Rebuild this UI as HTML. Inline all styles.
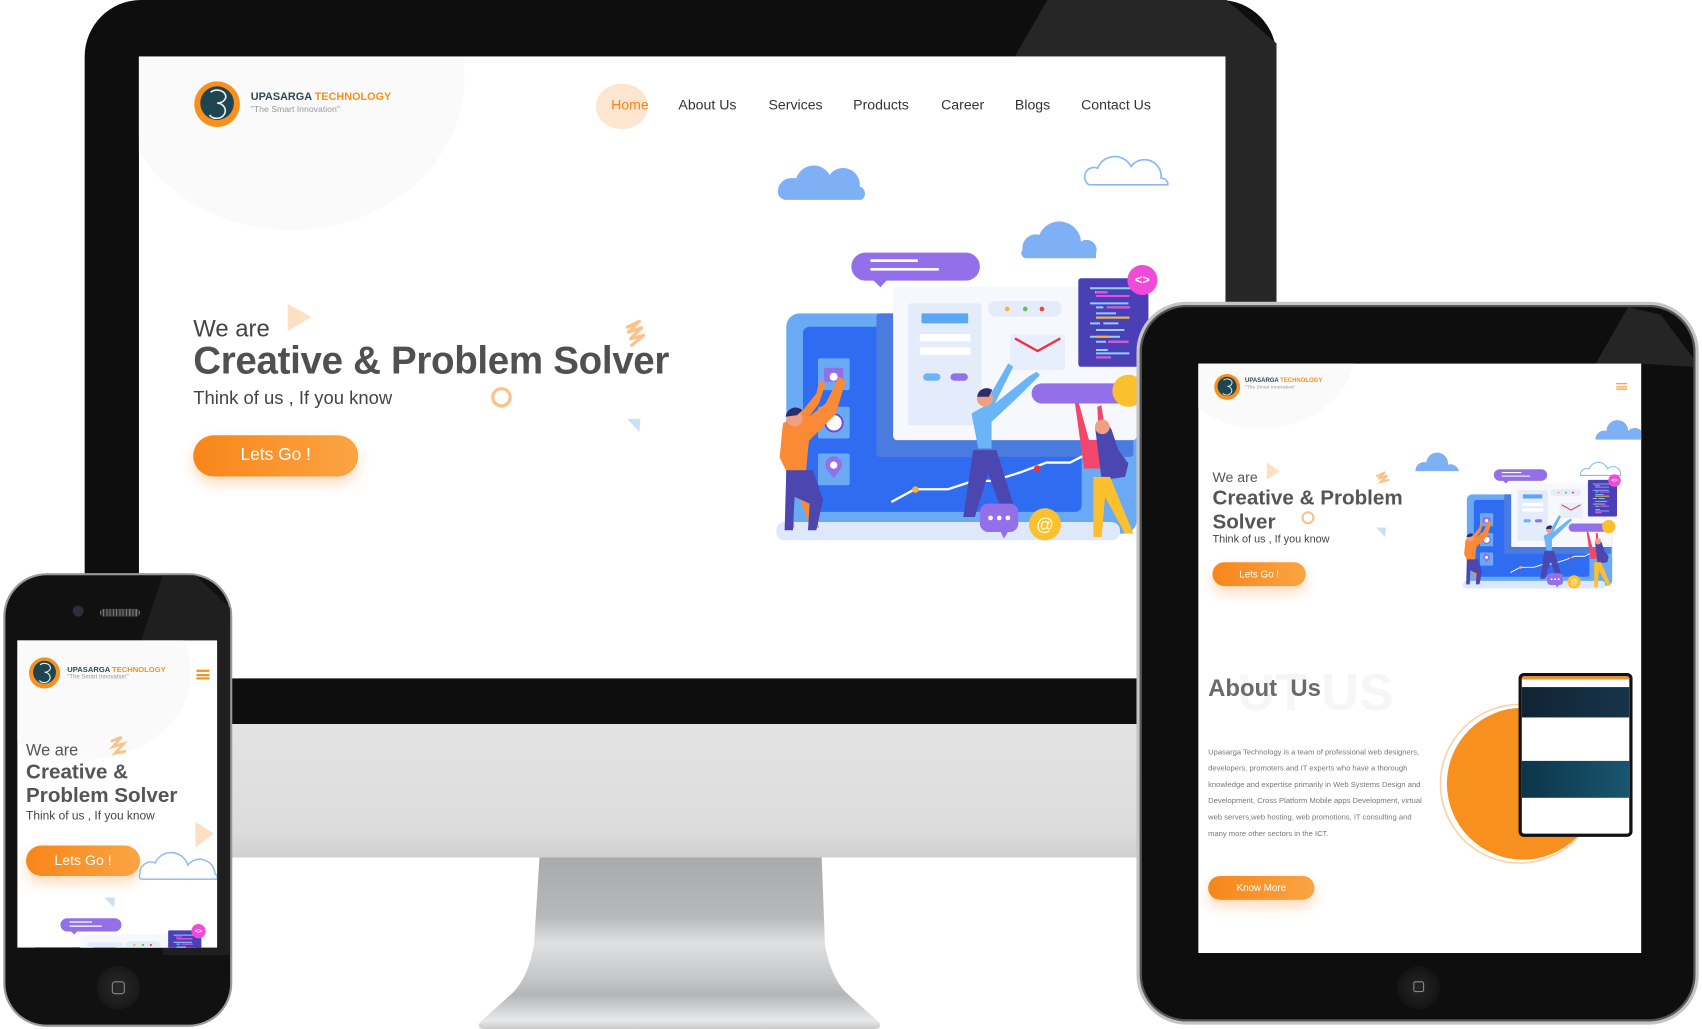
<!DOCTYPE html>
<html><head><meta charset="utf-8">
<style>
*{margin:0;padding:0;box-sizing:border-box}
html,body{width:1702px;height:1029px;overflow:hidden;background:#fff}
#w{position:absolute;left:0;top:0;width:1568px;height:948px;transform:scale(1.08546,1.08544);transform-origin:0 0;font-family:"Liberation Sans",sans-serif}
.a{position:absolute}
.t{position:absolute;white-space:nowrap;line-height:1}
.btn{position:absolute;border-radius:999px;background:linear-gradient(90deg,#f7861a,#fba443);color:#fff;text-align:center;box-shadow:0 6px 12px rgba(247,134,26,.3)}
</style></head><body>
<svg width="0" height="0" style="position:absolute">
<defs>
<symbol id="core" viewBox="0 0 1200 1200">
 <rect x="50" y="490" width="1050" height="660" rx="40" fill="#6aaaf5"/>
 <rect x="100" y="530" width="835" height="555" rx="20" fill="#2f6cf2"/>
 <rect x="20" y="1115" width="1030" height="55" rx="25" fill="#dde8fb"/>
 <rect x="320" y="490" width="770" height="430" rx="10" fill="#4a7ce0"/>
 <rect x="370" y="410" width="730" height="460" rx="12" fill="#f6f8fd"/>
 <rect x="415" y="460" width="220" height="365" rx="6" fill="#e4ecfb"/>
 <rect x="455" y="490" width="140" height="30" rx="4" fill="#5aa8f5"/>
 <rect x="450" y="552" width="152" height="22" fill="#fff"/>
 <rect x="450" y="592" width="152" height="22" fill="#fff"/>
 <rect x="460" y="670" width="52" height="22" rx="11" fill="#6ab4f7"/>
 <rect x="542" y="670" width="52" height="22" rx="11" fill="#9370ea"/>
 <rect x="655" y="453" width="220" height="47" rx="23" fill="#e4ecfb"/>
 <circle cx="712" cy="477" r="7" fill="#f9b233"/><circle cx="766" cy="477" r="7" fill="#6cc04a"/><circle cx="816" cy="477" r="7" fill="#e94a2e"/>
 <rect x="720" y="553" width="165" height="107" rx="6" fill="#e7eefc"/>
 <path d="M735 565l68 38l68-38" fill="none" stroke="#f0303a" stroke-width="7"/>
 <rect x="925" y="385" width="210" height="265" rx="8" fill="#4a3fb5"/>
 <g stroke-width="6"><path d="M960 415h20M980 415h105M975 427h35M978 438h100M960 460h115M978 472h22M1010 472h70M978 490h60M978 503h100M960 520h30M1000 520h45M978 540h85M960 560h90M978 575h30M1015 575h60M978 600h35M978 610h100M978 622h45" stroke="#8fd0ff"/><path d="M978 427h35M978 438h100M1010 472h70M1015 575h60M978 622h45" stroke="#f04ad8"/><path d="M978 503h100M978 560h40" stroke="#f9b233"/></g>
 <circle cx="1117" cy="390" r="45" fill="#f04ad8"/><text x="1117" y="402" font-family="Liberation Sans" font-size="38" font-weight="bold" fill="#fff" text-anchor="middle">&lt;&gt;</text>
 <rect x="245" y="308" width="385" height="84" rx="42" fill="#9370ea"/><path d="M310 390l22 22l20-22z" fill="#9370ea"/>
 <path d="M302 332h142M302 358h205" stroke="#fff" stroke-width="8"/>
 <rect x="785" y="700" width="300" height="60" rx="30" fill="#9370ea"/>
 <circle cx="1075" cy="722" r="48" fill="#fbc02d"/>
 <rect x="145" y="625" width="95" height="95" rx="6" fill="#6aaaf5"/><rect x="163" y="653" width="58" height="42" rx="6" fill="#9370ea"/><circle cx="192" cy="680" r="12" fill="#fff"/>
 <rect x="145" y="770" width="95" height="95" rx="6" fill="#6aaaf5"/><circle cx="193" cy="818" r="26" fill="#fff" stroke="#6a4fd0" stroke-width="6"/>
 <rect x="145" y="910" width="95" height="95" rx="6" fill="#6aaaf5"/><path d="M192 985l-22-30a25 25 0 1 1 44 0z" fill="#9370ea"/><circle cx="192" cy="945" r="11" fill="#fff"/>
 <path d="M365 1055l70-38h100l75-25h60l80-25l80-30h70l80-40" fill="none" stroke="#fff" stroke-width="7"/>
 <circle cx="437" cy="1018" r="10" fill="#f9b233"/><circle cx="802" cy="955" r="10" fill="#f0303a"/>
 <path d="M40 820l60-40l40-50l10-40l18 10l-20 60l-30 40l50-40l40-80l20 12l-30 100l-80 80l-10 100l40 160h-25l-45-120l-25 120H75l-20-160l-25-50z" fill="#fb8a36"/>
 <path d="M50 960h80l30 90l-20 90h-25l5-80l-45-20l-5 100h-25z" fill="#4b46b0"/>
 <circle cx="75" cy="805" r="24" fill="#f0a080"/><path d="M48 800a30 30 0 0 1 50-20l-15 15z" fill="#2a2d6e"/>
 <path d="M605 790l35-20l75-130l15 10l-55 110l100-80l25-15l10 10l-70 70l-75 70v80l-40 0z" fill="#6ab4f7"/>
 <path d="M610 900h70l65 210h-40l-50-140l-40 130h-35z" fill="#4b46b0"/>
 <circle cx="645" cy="745" r="24" fill="#f0a080"/><path d="M622 740a28 28 0 0 1 45-20l-10 20z" fill="#2a2d6e"/>
 <path d="M915 760l12 0l30 110l30 0l-5-100l12-5l18 120l-20 70h-50z" fill="#f2476a"/>
 <path d="M975 830a30 30 0 0 1 50 10l20 60l30 40l-10 40l-70 10z" fill="#4b46b0"/>
 <path d="M970 980h50l70 170h-25l-60-110l-10 120h-25z" fill="#fbc02d"/>
 <circle cx="997" cy="830" r="22" fill="#f0a080"/>
 <rect x="630" y="1060" width="115" height="85" rx="25" fill="#9370ea"/><path d="M690 1140l12 25l15-25z" fill="#9370ea"/>
 <circle cx="662" cy="1103" r="7" fill="#fff"/><circle cx="688" cy="1103" r="7" fill="#fff"/><circle cx="714" cy="1103" r="7" fill="#fff"/>
 <circle cx="825" cy="1122" r="48" fill="#fbc02d"/><text x="825" y="1140" font-family="Liberation Sans" font-size="52" fill="#fff" text-anchor="middle">@</text>
</symbol>
<symbol id="ill" viewBox="0 0 1200 1200">
 <path d="M25 130a40 40 0 0 1 40-45h15a55 55 0 0 1 100-10a50 50 0 0 1 90 35a22 22 0 0 1 5 40H50a25 25 0 0 1-25-20z" fill="#7fb0f5"/>
 <path d="M948 95a28 28 0 0 1 35-40a55 55 0 0 1 100-5a50 50 0 0 1 90 35a20 20 0 0 1 20 15v5H960a15 15 0 0 1-12-10z" fill="none" stroke="#8ab8f5" stroke-width="5"/>
 <path d="M758 300a40 40 0 0 1 50-45a65 65 0 0 1 125 20a30 30 0 0 1 45 35v15H770a15 15 0 0 1-12-25z" fill="#7fb0f5"/>
 <use href="#core" width="1200" height="1200"/>
</symbol>
<symbol id="logo" viewBox="0 0 44 44">
 <circle cx="22" cy="22" r="21" fill="#f7901e"/>
 <circle cx="22" cy="21" r="15.5" fill="#1f4650"/>
 <path d="M16 11a8 6 0 1 1 6 10a8 7 0 1 1-7 11" fill="none" stroke="#e8f0f0" stroke-width="1.5"/>
</symbol>
</defs></svg>

<div id="w">
<!-- MONITOR -->
<div class="a" style="left:78px;top:0;width:1098px;height:667px;background:#0e0e0e;border-radius:52px 52px 0 0"></div>
<svg class="a" style="left:0;top:0" width="1568" height="948"><polygon points="965,0 1130,0 1176,40 1176,290 1129,290 1129,52 935,52" fill="#262626"/></svg>
<div class="a" style="left:78px;top:667px;width:1098px;height:123px;background:linear-gradient(180deg,#e3e3e3,#dcdcdc 80%,#d0d0d0)"></div>
<svg class="a" style="left:0;top:0" width="1568" height="948">
<defs><linearGradient id="st" x1="0" y1="0" x2="0" y2="1"><stop offset="0" stop-color="#a9aaac"/><stop offset=".35" stop-color="#b8b9bb"/><stop offset=".5" stop-color="#dfe0e1"/><stop offset=".7" stop-color="#c6c7c8"/><stop offset=".8" stop-color="#b4b5b7"/><stop offset=".95" stop-color="#e8e9ea"/><stop offset="1" stop-color="#c9c9c9"/></linearGradient></defs>
<path d="M497 790H757l3 80q5 30 20 45l30 27q3 6-5 6H447q-8 0-5-6l30-27q15-15 20-45z" fill="url(#st)"/>
</svg>
<div class="a" style="left:128px;top:52px;width:1001px;height:573px;background:#fff;overflow:hidden">
 <div class="a" style="left:-20px;top:-150px;width:300px;height:300px;border-radius:50%;background:#fafafa"></div>
 <div class="a" style="left:-20px;top:-120px;width:320px;height:280px;border-radius:50%;background:#fafafa"></div>
 <svg class="a" style="left:50px;top:22px" width="44" height="44"><use href="#logo"/></svg>
 <div class="t" style="left:103px;top:33px;font-size:10px;font-weight:bold;color:#2c4a52">UPASARGA <span style="color:#f7901e">TECHNOLOGY</span></div>
 <div class="t" style="left:103px;top:45px;font-size:8px;color:#999">"The Smart Innovation"</div>
 <div class="a" style="left:421px;top:25px;width:48px;height:42px;border-radius:50%;background:#fde6d0"></div>
 <div class="t" style="left:435px;top:38px;font-size:13px;color:#f7861a">Home</div>
 <div class="t" style="left:497px;top:38px;font-size:13px;color:#333">About Us</div>
 <div class="t" style="left:580px;top:38px;font-size:13px;color:#333">Services</div>
 <div class="t" style="left:658px;top:38px;font-size:13px;color:#333">Products</div>
 <div class="t" style="left:739px;top:38px;font-size:13px;color:#333">Career</div>
 <div class="t" style="left:807px;top:38px;font-size:13px;color:#333">Blogs</div>
 <div class="t" style="left:868px;top:38px;font-size:13px;color:#333">Contact Us</div>
 <svg class="a" style="left:0;top:0" width="1001" height="573">
  <polygon points="137,228 159,240 137,253" fill="#fde0c4"/>
  <path d="M449 250l12-6-10 10 12-4-10 10 12-3-12 10" fill="none" stroke="#fbc38c" stroke-width="3" stroke-linejoin="round"/>
  <circle cx="334" cy="314" r="8" fill="none" stroke="#fbc38c" stroke-width="3"/>
  <polygon points="450,334 462,334 461,346" fill="#c9e0f8"/>
 </svg>
 <div class="t" style="left:50px;top:240px;font-size:22px;color:#444">We are</div>
 <div class="t" style="left:50px;top:263px;font-size:35.5px;font-weight:bold;color:#505050;letter-spacing:-0.3px">Creative &amp; Problem Solver</div>
 <div class="t" style="left:50px;top:306px;font-size:17px;color:#444">Think of us , If you know</div>
 <div class="btn" style="left:50px;top:349px;width:152px;height:38px;line-height:38px;font-size:16px">Lets Go !</div>
 <svg class="a" style="left:581px;top:86px" width="369" height="369"><use href="#ill"/></svg>
</div>

<!-- PHONE -->
<div class="a" style="left:3px;top:528px;width:211px;height:418px;border-radius:40px;background:#111;border:2px solid #9a9a9a"></div>
<svg class="a" style="left:0;top:0" width="1568" height="948"><polygon points="150,530 180,530 212,560 212,880 150,880 130,590 " fill="#232323" opacity=".8"/></svg>
<div class="a" style="left:67px;top:558px;width:10px;height:10px;border-radius:50%;background:#2a2f3a"></div>
<div class="a" style="left:92px;top:561px;width:37px;height:7px;border-radius:4px;background:repeating-linear-gradient(90deg,#777 0 1px,#333 1px 3px)"></div>
<div class="a" style="left:89px;top:890px;width:40px;height:40px;border-radius:50%;background:radial-gradient(#2a2a2a,#111)"></div>
<div class="a" style="left:103px;top:904px;width:12px;height:12px;border:1.5px solid #888;border-radius:3px"></div>
<div class="a" style="left:16px;top:590px;width:184px;height:283px;background:#fff;overflow:hidden">
 <div class="a" style="left:-40px;top:-50px;width:200px;height:160px;border-radius:50%;background:#fafafa"></div>
 <svg class="a" style="left:10px;top:15px" width="30" height="30"><use href="#logo"/></svg>
 <div class="t" style="left:46px;top:24px;font-size:7px;font-weight:bold;color:#2c4a52">UPASARGA <span style="color:#f7901e">TECHNOLOGY</span></div>
 <div class="t" style="left:46px;top:32px;font-size:5.5px;color:#999">"The Smart Innovation"</div>
 <div class="a" style="left:165px;top:27px;width:12px;height:9px;border-top:2px solid #f7901e;border-bottom:2px solid #f7901e"></div>
 <div class="a" style="left:165px;top:31px;width:12px;height:2px;background:#f7901e"></div>
 <div class="t" style="left:8px;top:94px;font-size:15px;color:#555">We are</div>
 <div class="t" style="left:8px;top:112px;font-size:19px;font-weight:bold;color:#555">Creative &amp;</div>
 <div class="t" style="left:8px;top:134px;font-size:19px;font-weight:bold;color:#555">Problem Solver</div>
 <div class="t" style="left:8px;top:157px;font-size:11px;color:#444">Think of us , If you know</div>
 <div class="btn" style="left:8px;top:189px;width:105px;height:28px;line-height:28px;font-size:13px">Lets Go !</div>
 <svg class="a" style="left:0;top:0" width="184" height="283">
  <path d="M86 93l10-4-8 9 10-3-8 9 10-2" fill="none" stroke="#fbc38c" stroke-width="2.5"/>
  <polygon points="164,167 181,178 164,191" fill="#fde0c4"/>
  <path d="M113 215a10 10 0 0 1 14-10a16 16 0 0 1 30 2a14 14 0 0 1 25 8q3 2 2 5H116q-5 0-3-5z" fill="#fff" stroke="#8ab8f5" stroke-width="1.3"/>
  <polygon points="80,237 90,237 89,246" fill="#c9e0f8"/>
 </svg>
 <svg class="a" style="left:4px;top:211px" width="175" height="175"><use href="#core"/></svg>
</div>

<!-- TABLET -->
<div class="a" style="left:1047px;top:278px;width:518px;height:666px;border-radius:46px;background:#0e0e0e;border:3px solid #c4c4c4;box-shadow:inset 0 0 0 2px #555"></div>
<svg class="a" style="left:0;top:0" width="1568" height="948"><polygon points="1500,283 1530,290 1560,330 1560,338 1512,335 1470,335" fill="#252525"/></svg>
<div class="a" style="left:1287px;top:890px;width:40px;height:40px;border-radius:50%;background:radial-gradient(#262626,#0c0c0c)"></div>
<div class="a" style="left:1302px;top:904px;width:10px;height:10px;border:1.5px solid #888;border-radius:2px"></div>
<div class="a" style="left:1104px;top:335px;width:408px;height:543px;background:#fff;overflow:hidden">
 <div class="a" style="left:-30px;top:-90px;width:175px;height:150px;border-radius:50%;background:#fafafa"></div>
 <svg class="a" style="left:14px;top:9px" width="25" height="25"><use href="#logo"/></svg>
 <div class="t" style="left:43px;top:14px;font-size:5.5px;font-weight:bold;color:#2c4a52">UPASARGA <span style="color:#f7901e">TECHNOLOGY</span></div>
 <div class="t" style="left:43px;top:20px;font-size:4.5px;color:#999">"The Smart Innovation"</div>
 <div class="a" style="left:385px;top:18px;width:10px;height:6px;border-top:1.5px solid #f7901e;border-bottom:1.5px solid #f7901e"></div>
 <div class="a" style="left:385px;top:20.5px;width:10px;height:1.5px;background:#f7901e"></div>
 <svg class="a" style="left:0;top:0" width="408" height="543">
  <path d="M366 68a8 8 0 0 1 10-6a10 10 0 0 1 20 0a8 8 0 0 1 14 4v4H366z" fill="#7fb0f5"/>
  <path d="M200 98a8 8 0 0 1 10-7a10 10 0 0 1 20 2a8 8 0 0 1 10 6v0H200z" fill="#7fb0f5"/>
  <path d="M352 102a6 6 0 0 1 8-5a9 9 0 0 1 17 0a7 7 0 0 1 12 4v2H352z" fill="#fff" stroke="#8ab8f5" stroke-width="1"/>
  <polygon points="63,91 75,99 63,107" fill="#fde0c4"/>
  <path d="M164 104l8-4-6 6 8-3-6 6 8-2" fill="none" stroke="#fbc38c" stroke-width="2"/>
  <circle cx="101" cy="142" r="5" fill="none" stroke="#fbc38c" stroke-width="2"/>
  <polygon points="164,151 173,151 172,160" fill="#c9e0f8"/>
  <circle cx="296" cy="387" r="73" fill="none" stroke="#fbd2a6" stroke-width="1.5"/>
  <circle cx="299" cy="387" r="70" fill="#f7901e"/>
 </svg>
 <div class="t" style="left:13px;top:98px;font-size:13px;color:#555">We are</div>
 <div class="t" style="left:13px;top:115px;font-size:19px;font-weight:bold;color:#555">Creative &amp; Problem</div>
 <div class="t" style="left:13px;top:137px;font-size:19px;font-weight:bold;color:#555">Solver</div>
 <div class="t" style="left:13px;top:158px;font-size:10px;color:#444">Think of us , If you know</div>
 <div class="btn" style="left:13px;top:183px;width:86px;height:22px;line-height:22px;font-size:9px">Lets Go !</div>
 <svg class="a" style="left:241px;top:58px" width="153" height="153"><use href="#core"/></svg>
 <div class="t" style="left:36px;top:280px;font-size:48px;font-weight:bold;color:#f6f6f6">UT US</div>
 <div class="t" style="left:9px;top:288px;font-size:22px;font-weight:bold;color:#6a6a6a">About&nbsp; Us</div>
 <div class="a" style="left:9px;top:351px;width:200px;font-size:7px;line-height:15.1px;color:#777">Upasarga Technology is a team of professional web designers, developers, promoters and IT experts who have a thorough knowledge and expertise primarily in Web Systems Design and Development, Cross Platform Mobile apps Development, virtual web servers,web hosting, web promotions, IT consulting and many more other sectors in the ICT.</div>
 <div class="btn" style="left:9px;top:472px;width:98px;height:22px;line-height:22px;font-size:9px">Know More</div>
 <div class="a" style="left:295px;top:285px;width:105px;height:151px;border-radius:5px;background:#111;padding:3px">
  <div style="position:absolute;left:3px;top:3px;right:3px;bottom:3px;background:#fff;border-radius:2px;overflow:hidden">
   <div style="height:3px;background:#f7901e"></div>
   <div style="height:7px;background:#fff"></div>
   <div style="height:28px;background:linear-gradient(90deg,#0f2434,#17344a)"></div>
   <div style="height:40px;background:#fff"></div>
   <div style="height:34px;background:linear-gradient(90deg,#0c3548,#1a5670)"></div>
  </div>
 </div>
</div>
</div>
</body></html>
